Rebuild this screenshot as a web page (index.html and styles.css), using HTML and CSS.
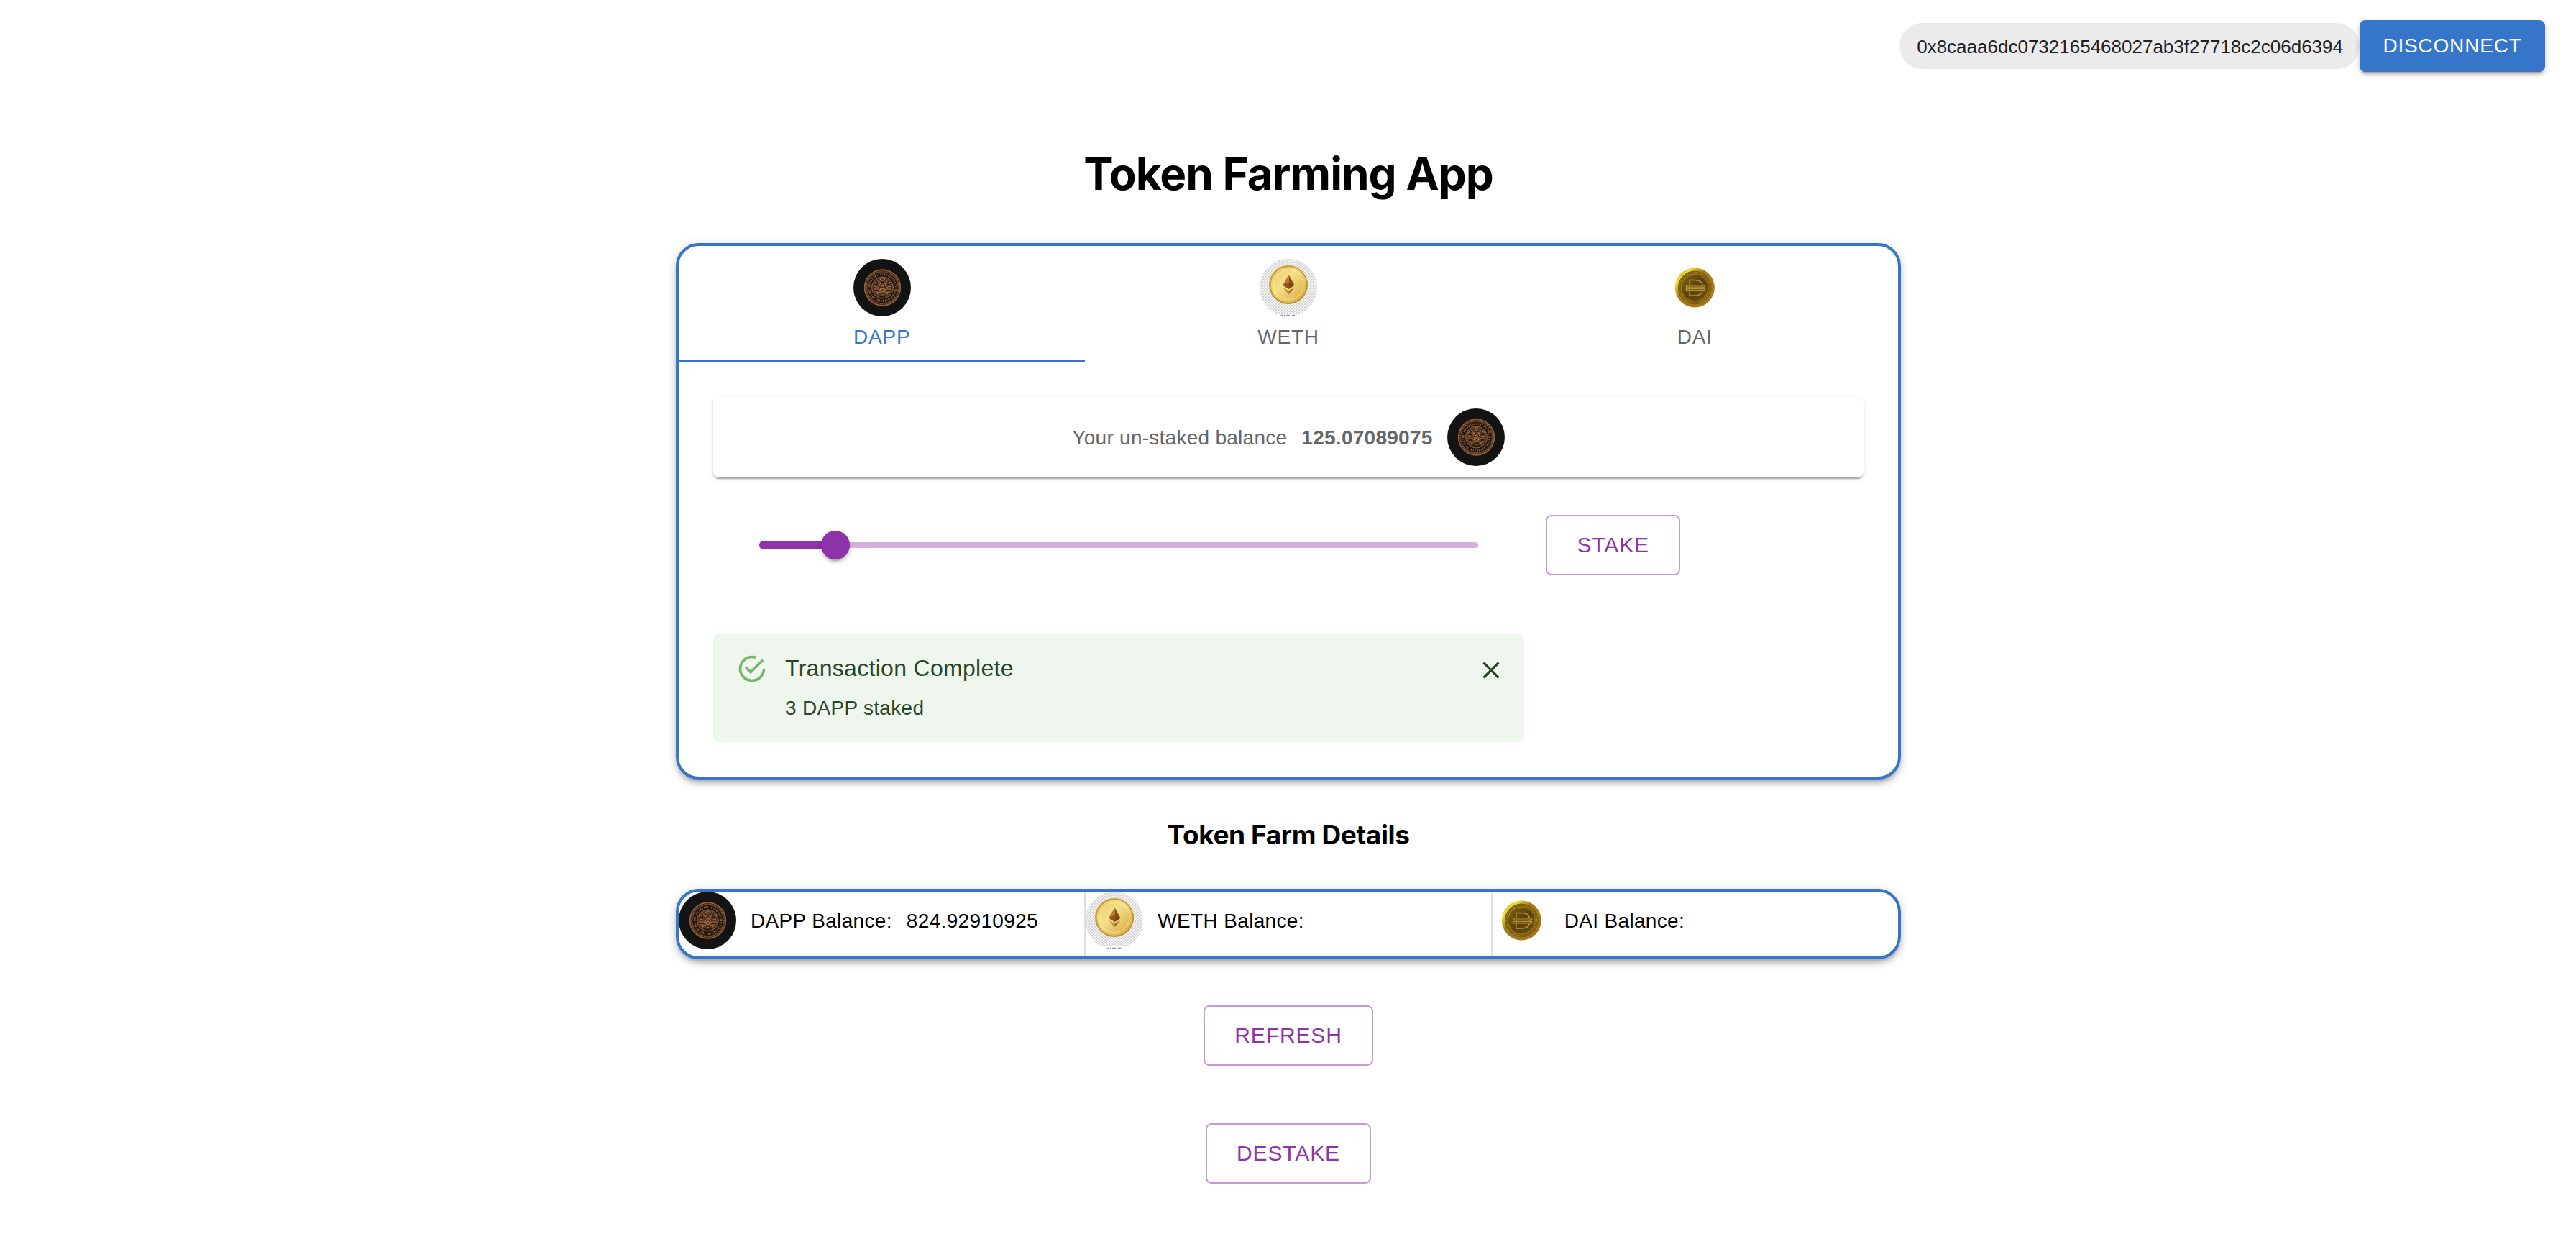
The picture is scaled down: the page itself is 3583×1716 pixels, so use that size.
FILE: index.html
```html
<!DOCTYPE html>
<html lang="en">
<head>
<meta charset="utf-8">
<title>Token Farming App</title>
<link rel="stylesheet" href="styles.css">
</head>
<body>
<svg class="sprite" aria-hidden="true">
  <defs>
    <linearGradient id="gold" x1="0" y1="0" x2="1" y2="1"><stop offset="0" stop-color="#e9c565"/><stop offset=".4" stop-color="#f5e08a"/><stop offset="1" stop-color="#d5a43c"/></linearGradient>
    <linearGradient id="gold-rim" x1="0" y1="0" x2="1" y2="1"><stop offset="0" stop-color="#d8a43a"/><stop offset=".5" stop-color="#cb982f"/><stop offset="1" stop-color="#bd8623"/></linearGradient>
    <linearGradient id="dai-rim" x1="0" y1="0" x2="1" y2="1"><stop offset=".08" stop-color="#b8960f"/><stop offset=".2" stop-color="#f0e232"/><stop offset=".4" stop-color="#a67f14"/><stop offset="1" stop-color="#a87222"/></linearGradient>
    <linearGradient id="dai-face" x1="0" y1="0" x2="1" y2="1"><stop offset="0" stop-color="#80620f"/><stop offset=".5" stop-color="#5a4211"/><stop offset="1" stop-color="#6f4e14"/></linearGradient>
    <pattern id="checks" width="4" height="4" patternUnits="userSpaceOnUse"><path fill="#f4f4f4" d="M0 0h4v4H0z"/><path fill="#d6d6d6" d="M0 0h2v2H0zM2 2h2v2H2z"/></pattern>
    <clipPath id="round"><circle cx="40" cy="40" r="40"/></clipPath>
  </defs>
  <symbol id="coin-dapp" viewBox="0 0 80 80">
    <circle cx="40" cy="40" r="40" fill="#131313"/>
    <g fill="none" stroke="#925f3a">
      <circle cx="40.500" cy="40" r="24.800" fill="#2c1d13" stroke-width="1.800"/>
      <circle cx="40.500" cy="40" r="22.300" stroke-width="2.200" stroke-dasharray="1.600 .7" stroke="#7d5031"/>
      <circle cx="40.500" cy="40" r="18.300" stroke="#181310" stroke-width="4.500"/>
      <circle cx="40.500" cy="40" r="18.500" stroke-width="2.800" stroke-dasharray="1.200 1 2 1.400 .9 1.600" stroke="#86583a"/>
      <circle cx="40.500" cy="40" r="15" fill="#50341f" stroke-width="1"/>
      <path stroke="#a66f46" stroke-width="1.100" d="M28 34l6-3 3 4 3.500-5 3.500 5 3-4 6 3M29 38l8 2 3.500-3 3.500 3 8-2M28 42h7l5.500 4 5.500-4h7M33 49l4-3 3.500 4 3.500-4 4 3M37 29l3.500-3 3.500 3M36 36l2 7 2.500-2 2.500 2 2-7M30 45l5 2M51 45l-5 2"/>
      <path stroke="#171210" stroke-width="1.300" d="M30 36h4M47 36h4M30 44h4M47 44h4M35 51l5.500 2 5.500-2M38 32h5M36 39h2M43 39h2M38 48h5M32 32h2M47 32h2"/>
    </g>
  </symbol>
  <symbol id="coin-weth" viewBox="0 0 80 80">
    <g clip-path="url(#round)">
      <path fill="url(#checks)" d="M0 0h80v80H0z"/>
      <path fill="#fff" d="M0 76h80v4H0z"/>
      <path stroke="#999" stroke-width="1.500" stroke-dasharray="4 1 2 1 5 3" d="M29 78.500h24"/>
    </g>
    <circle cx="40" cy="36" r="27" fill="url(#gold-rim)"/>
    <circle cx="40.500" cy="36" r="24.800" fill="url(#gold)"/>
    <circle cx="40.500" cy="36" r="20.500" fill="none" stroke="#fff0b3" stroke-width=".8" stroke-dasharray="3 .8"/>
    <path fill="#b77a34" d="M40.500 22v20l-8.500-5.500z"/>
    <path fill="#8d4f1b" d="M40.500 22l8 14.500-8 5.500z"/>
    <path fill="#7b3e12" d="M32 36.500l8.500-4 8 4-8 5.500z" opacity=".65"/>
    <path fill="#c48b37" d="M32.500 40l8 4.500v5z"/>
    <path fill="#a4692a" d="M40.500 44.500l7.500-4.500-7.500 9.500z"/>
  </symbol>
  <symbol id="coin-dai" viewBox="0 0 80 80">
    <circle cx="40.300" cy="40" r="27.500" fill="url(#dai-rim)"/>
    <circle cx="40.300" cy="40" r="21.300" fill="none" stroke="#7d5d10" stroke-width="4.200"/>
    <circle cx="40.300" cy="40" r="21.500" fill="none" stroke="#b58b25" stroke-width="1.300" stroke-dasharray="1.300 2"/>
    <circle cx="40.300" cy="40" r="18.600" fill="url(#dai-face)" stroke="#9d7620" stroke-width=".8"/>
    <g fill="none" stroke="#b9942f" stroke-width="1.400">
      <path d="M33 36.500V29.500h8c5 0 9 2.500 10.500 7M33 44v7h8c5 0 9-2.500 10.500-7M33 39.500v1.500M52 39.500v1.500"/>
      <path d="M28.500 36.800h26v2.300h-26zM28.500 41.500h26v2.300h-26z"/>
    </g>
  </symbol>
</svg>

<header class="topbar">
  <div class="chip">0x8caaa6dc0732165468027ab3f27718c2c06d6394</div>
  <button class="btn btn-contained">DISCONNECT</button>
</header>

<main class="container">
  <h1 class="title"><span>Token Farming App</span></h1>

  <section class="card wallet">
    <nav class="tabs">
      <div class="tab tab-active"><svg class="coin"><use href="#coin-dapp"/></svg><span>DAPP</span></div>
      <div class="tab"><svg class="coin"><use href="#coin-weth"/></svg><span>WETH</span></div>
      <div class="tab"><svg class="coin"><use href="#coin-dai"/></svg><span>DAI</span></div>
    </nav>
    <div class="panel">
      <div class="balance">
        <span class="balance-label">Your un-staked balance</span>
        <strong class="balance-value">125.07089075</strong>
        <svg class="coin"><use href="#coin-dapp"/></svg>
      </div>
      <div class="stake">
        <div class="slider"><div class="track"></div><div class="thumb"></div></div>
        <button class="btn btn-outlined">STAKE</button>
      </div>
      <div class="alert">
        <svg class="alert-icon" viewBox="0 0 24 24"><path d="M20,12A8,8 0 0,1 12,20A8,8 0 0,1 4,12A8,8 0 0,1 12,4C12.76,4 13.5,4.11 14.2, 4.31L15.77,2.74C14.61,2.26 13.34,2 12,2A10,10 0 0,0 2,12A10,10 0 0,0 12,22A10,10 0 0, 0 22,12M7.91,10.08L6.5,11.5L11,16L21,6L19.59,4.58L11,13.17L7.91,10.08Z"/></svg>
        <div class="alert-text">
          <div class="alert-title"><span>Transaction Complete</span></div>
          <div class="alert-body"><span>3 DAPP staked</span></div>
        </div>
        <svg class="alert-close" viewBox="0 0 24 24"><path d="M19 6.41L17.59 5 12 10.59 6.41 5 5 6.41 10.59 12 5 17.59 6.41 19 12 13.41 17.59 19 19 17.59 13.41 12z"/></svg>
      </div>
    </div>
  </section>

  <h2 class="subtitle"><span>Token Farm Details</span></h2>

  <section class="card details">
    <div class="cell"><svg class="coin"><use href="#coin-dapp"/></svg><span>DAPP Balance:</span><span>824.92910925</span></div>
    <div class="cell"><svg class="coin"><use href="#coin-weth"/></svg><span>WETH Balance:</span></div>
    <div class="cell"><svg class="coin"><use href="#coin-dai"/></svg><span>DAI Balance:</span></div>
  </section>

  <div class="actions">
    <button class="btn btn-outlined">REFRESH</button>
    <button class="btn btn-outlined">DESTAKE</button>
  </div>
</main>
</body>
</html>
```
FILE: styles.css
```css
* { box-sizing: border-box; }

body {
  margin: 0;
  padding-left: 1px;
  background: #fff;
  color: #000;
  font: 28px/42px "Liberation Sans", Arial, sans-serif;
}

.sprite { position: absolute; width: 0; height: 0; }

.topbar {
  display: flex;
  justify-content: flex-end;
  align-items: center;
  height: 128px;
  padding-right: 43px;
}

.chip {
  display: flex;
  align-items: center;
  height: 64px;
  padding: 2px 23px 0 24px;
  border-radius: 32px;
  background: #ebebeb;
  color: #212121;
  font-size: 26px;
  white-space: nowrap;
}

.btn {
  border: 0;
  border-radius: 8px;
  font-family: inherit;
  letter-spacing: .02857em;
}

.btn-contained {
  width: 258px;
  height: 72px;
  padding: 0;
  background: #3576cb;
  color: #fff;
  font-size: 28px;
  box-shadow: 0 6px 2px -4px rgba(0,0,0,.2), 0 4px 4px rgba(0,0,0,.14), 0 2px 10px rgba(0,0,0,.12);
}

.btn-outlined {
  height: 84px;
  padding: 0 41.5px;
  border: 2px solid #c79ad5;
  background: transparent;
  color: #8e33a9;
  font-size: 30px;
}

.container { width: 1704px; margin: 0 auto; }

.title, .subtitle {
  margin: 0;
  font-family: Inter, sans-serif;
  font-weight: 700;
  text-align: center;
  white-space: nowrap;
}

.title { height: 210px; padding-top: 75px; font-size: 62px; line-height: 78px; letter-spacing: -1px; }

.subtitle { height: 152px; padding-top: 54px; font-size: 37px; line-height: 46px; letter-spacing: -.4px; }

.card {
  border: 4px solid #3576cb;
  border-radius: 32px;
  background: #fff;
  box-shadow: 0 6px 6px -4px rgba(0,0,0,.2), 0 6px 8px rgba(0,0,0,.16), 0 2px 16px rgba(0,0,0,.12);
}

.coin { display: block; flex: none; width: 80px; height: 80px; }

.wallet { height: 746px; }

.tabs { display: grid; grid-template-columns: repeat(3, 1fr); height: 162px; }

.tab {
  display: flex;
  flex-direction: column;
  align-items: center;
  gap: 11px;
  padding-top: 18px;
  color: #666;
  line-height: 35px;
  letter-spacing: .02857em;
}

.tab-active { border-bottom: 4px solid #3576cb; color: #3576cb; }

.panel { padding: 48px; }

.balance {
  display: flex;
  justify-content: center;
  align-items: center;
  height: 112px;
  border-radius: 8px;
  color: #666;
  line-height: 40px;
  letter-spacing: .00938em;
  box-shadow: 0 4px 2px -2px rgba(0,0,0,.2), 0 2px 2px rgba(0,0,0,.14), 0 2px 6px rgba(0,0,0,.12);
}

.balance-label, .balance-value { padding-top: 2px; margin-right: 20px; }

.stake {
  display: flex;
  align-items: center;
  gap: 94px;
  height: 188px;
  padding-left: 64px;
}

.slider {
  display: flex;
  align-items: center;
  width: 1000px;
  height: 8px;
  border-radius: 6px;
  background: #d6b1df;
}

.track { width: 106px; height: 12px; border-radius: 6px; background: #8e33a9; }

.thumb {
  width: 40px;
  height: 40px;
  margin-left: -20px;
  border-radius: 50%;
  background: #8e33a9;
  box-shadow: 0 6px 2px -4px rgba(0,0,0,.2), 0 4px 4px rgba(0,0,0,.14), 0 2px 10px rgba(0,0,0,.12);
}

.alert {
  display: flex;
  align-items: flex-start;
  width: 1128px;
  height: 150px;
  margin-top: 30px;
  padding: 26px 26px 0 32px;
  border-radius: 8px;
  background: #eff6ee;
  color: #28452a;
}

.alert-icon { flex: none; width: 44px; height: 44px; margin-right: 24px; fill: #75b668; }
.alert-text { flex: 1; }
.alert-title { font-size: 32px; line-height: 48px; letter-spacing: .00938em; margin-top: -3px; }
.alert-body { line-height: 40px; margin-top: 12px; letter-spacing: .01071em; }
.alert-close { width: 40px; height: 40px; margin-top: 4px; fill: #28452a; }

.details { display: grid; grid-template-columns: repeat(3, 1fr); height: 98px; }

.cell {
  display: flex;
  align-items: center;
  gap: 20px;
  height: 80px;
  letter-spacing: .012em;
  white-space: nowrap;
}

.cell span { padding-top: 2px; }

.cell + .cell { height: 90px; padding-bottom: 10px; border-left: 2px solid #dedede; margin-left: -1px; }

.actions {
  display: flex;
  flex-direction: column;
  align-items: center;
  gap: 80px;
  padding-top: 64px;
}
```
